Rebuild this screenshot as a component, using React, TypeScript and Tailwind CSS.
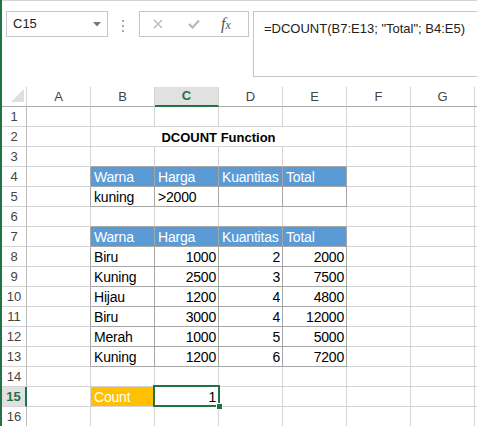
import React from "react";

type Align = "l" | "r" | "c";
type CellDef = { text?: string; align?: Align; kind?: "blue" | "orange" };

const FONT = { fontFamily: '"Liberation Sans", Arial, sans-serif' };

const data: Record<number, (CellDef | null)[]> = {
  4: [null, { text: "Warna", kind: "blue" }, { text: "Harga", kind: "blue" }, { text: "Kuantitas", kind: "blue" }, { text: "Total", kind: "blue" }],
  5: [null, { text: "kuning" }, { text: ">2000" }, {}, {}],
  7: [null, { text: "Warna", kind: "blue" }, { text: "Harga", kind: "blue" }, { text: "Kuantitas", kind: "blue" }, { text: "Total", kind: "blue" }],
  8: [null, { text: "Biru" }, { text: "1000", align: "r" }, { text: "2", align: "r" }, { text: "2000", align: "r" }],
  9: [null, { text: "Kuning" }, { text: "2500", align: "r" }, { text: "3", align: "r" }, { text: "7500", align: "r" }],
  10: [null, { text: "Hijau" }, { text: "1200", align: "r" }, { text: "4", align: "r" }, { text: "4800", align: "r" }],
  11: [null, { text: "Biru" }, { text: "3000", align: "r" }, { text: "4", align: "r" }, { text: "12000", align: "r" }],
  12: [null, { text: "Merah" }, { text: "1000", align: "r" }, { text: "5", align: "r" }, { text: "5000", align: "r" }],
  13: [null, { text: "Kuning" }, { text: "1200", align: "r" }, { text: "6", align: "r" }, { text: "7200", align: "r" }],
  15: [null, { text: "Count", kind: "orange" }, { text: "1", align: "r" }],
};

const inTable = (r: number, c: number) =>
  ((r >= 4 && r <= 5) || (r >= 7 && r <= 13)) && c >= 1 && c <= 4;

const borderCls = (rd: boolean, bd: boolean) =>
  rd
    ? bd
      ? "border-r-[#a6a6a6] border-b-[#a6a6a6]"
      : "border-r-[#a6a6a6] border-b-[#d4d4d4]"
    : bd
    ? "border-r-[#d4d4d4] border-b-[#a6a6a6]"
    : "border-r-[#d4d4d4] border-b-[#d4d4d4]";

const COLS = ["A", "B", "C", "D", "E", "F", "G", ""];

function TopBar() {
  return (
    <div className="h-[87px] border-t border-[#d4d4d4] flex items-start">
      <div className="ml-[4px] mt-[10px] w-[102px] h-[26px] border border-[#c6c6c6] flex items-center justify-between pl-[6px] pr-[6px]">
        <span className="text-[13px] text-[#222]">C15</span>
        <svg width="8" height="5" viewBox="0 0 8 5">
          <path d="M0 0 L8 0 L4 4.5 Z" fill="#777" />
        </svg>
      </div>
      <div className="ml-[14px] mt-[19px] flex flex-col gap-[3px]">
        <div className="w-[2px] h-[2px] bg-[#a8a8a8]" />
        <div className="w-[2px] h-[2px] bg-[#a8a8a8]" />
        <div className="w-[2px] h-[2px] bg-[#a8a8a8]" />
      </div>
      <div className="ml-[15px] mt-[10px] w-[110px] h-[26px] border border-[#c6c6c6] flex items-center">
        <svg className="ml-[13px]" width="10" height="10" viewBox="0 0 10 10">
          <path d="M1 1 L9 9 M9 1 L1 9" stroke="#b8b8b8" strokeWidth="1.3" />
        </svg>
        <svg className="ml-[25px]" width="12" height="10" viewBox="0 0 12 10">
          <path d="M1 5 L4.5 8.5 L11 1.5" stroke="#b8b8b8" strokeWidth="2.2" fill="none" />
        </svg>
        <span
          className="ml-[21px] text-[16px] italic text-[#555] leading-none"
          style={{ fontFamily: '"Liberation Serif", "Times New Roman", serif' }}
        >
          f<span className="text-[12px]">x</span>
        </span>
      </div>
      <div className="ml-[4px] mt-[10px] flex-1 h-[66px] border border-r-0 border-[#c6c6c6] pl-[10px] pt-[4px]">
        <span className="text-[13px] text-[#222]">=DCOUNT(B7:E13; "Total"; B4:E5)</span>
      </div>
    </div>
  );
}

function HeaderRow() {
  return (
    <>
      <div className="h-[20px] border-r border-b border-r-[#d4d4d4] border-b-[#ababab] relative">
        <svg className="absolute left-[9px] top-[2px]" width="13" height="13" viewBox="0 0 13 13">
          <path d="M13 0 L13 13 L0 13 Z" fill="#dfdfdf" />
        </svg>
      </div>
      {COLS.map((c, i) =>
        c === "C" ? (
          <div
            key={i}
            className="h-[20px] border-r border-r-[#d4d4d4] border-b-2 border-b-[#217346] bg-[#e1e1e1] flex items-center justify-center text-[13px] text-[#217346] font-bold"
          >
            {c}
          </div>
        ) : (
          <div
            key={i}
            className="h-[20px] border-r border-b border-r-[#d4d4d4] border-b-[#ababab] flex items-center justify-center text-[13px] text-[#444]"
          >
            {c}
          </div>
        )
      )}
    </>
  );
}

function DataCell({ r, c }: { r: number; c: number }) {
  const def = data[r]?.[c] ?? null;
  const rd = inTable(r, c) || inTable(r, c + 1);
  const bd = inTable(r, c) || inTable(r + 1, c);
  const bg =
    def?.kind === "blue" ? "bg-[#5b9bd5] text-white" : def?.kind === "orange" ? "bg-[#ffc000] text-white" : "text-black";
  const align = def?.align === "r" ? "text-right pr-[2px]" : "text-left pl-[3px]";
  const selected = r === 15 && c === 2;
  return (
    <div
      className={`h-[20px] border-r border-b ${borderCls(rd, bd)} ${bg} ${align} text-[14px] tracking-[-0.2px] leading-[21px] whitespace-nowrap ${selected ? "relative z-10" : ""}`}
    >
      {def?.text ?? ""}
      {selected && (
        <div className="absolute -left-[2px] -top-[2px] -right-[2px] -bottom-[1px] border-2 border-[#217346]">
          <div className="absolute -right-[5px] -bottom-[5px] w-[7px] h-[7px] bg-[#217346] border border-white" />
        </div>
      )}
    </div>
  );
}

function Row({ r }: { r: number }) {
  const sel = r === 15;
  const cells: React.ReactNode[] = [];
  if (r === 2) {
    cells.push(<DataCell key="a" r={2} c={0} />);
    cells.push(
      <div
        key="m"
        className="col-span-4 h-[20px] border-r border-b border-r-[#d4d4d4] border-b-[#d4d4d4] text-center text-[13px] font-bold leading-[21px] text-black"
      >
        DCOUNT Function
      </div>
    );
    for (let c = 5; c < 8; c++) cells.push(<DataCell key={c} r={2} c={c} />);
  } else {
    for (let c = 0; c < 8; c++) cells.push(<DataCell key={c} r={r} c={c} />);
  }
  return (
    <>
      {sel ? (
        <div className="h-[20px] border-b border-b-[#d4d4d4] border-r-2 border-r-[#217346] bg-[#e1e1e1] flex items-center justify-center pt-[1px] text-[13px] font-bold text-[#217346]">
          {r}
        </div>
      ) : (
        <div className="h-[20px] border-b border-r border-b-[#d4d4d4] border-r-[#bdbdbd] flex items-center justify-center pt-[1px] text-[13px] text-[#444]">
          {r}
        </div>
      )}
      {cells}
    </>
  );
}

export default function App() {
  const rows = Array.from({ length: 16 }, (_, i) => i + 1);
  return (
    <div
      className="w-[477px] h-[426px] overflow-hidden bg-white border-l-2 border-[#217346] box-border"
      style={FONT}
    >
      <TopBar />
      <div className="grid grid-cols-[25px_repeat(7,64px)_1fr]">
        <HeaderRow />
        {rows.map((r) => (
          <Row key={r} r={r} />
        ))}
      </div>
    </div>
  );
}
